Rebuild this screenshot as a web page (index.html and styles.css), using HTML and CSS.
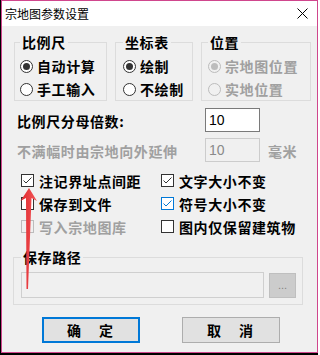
FILE: index.html
```html
<!DOCTYPE html>
<html lang="zh-CN">
<head>
    <meta charset="UTF-8">
    <meta name="viewport" content="width=device-width, initial-scale=1.0">
    <title>宗地图参数设置</title>
    <link rel="stylesheet" href="styles.css">
</head>
<body>

    <div class="window">
        <!-- Title bar -->
        <div class="titlebar">
            <span class="title">宗地图参数设置</span>
            <svg class="close" width="11" height="11" viewBox="0 0 11 11">
                <path d="M0.5 0.5L10.5 10.5M10.5 0.5L0.5 10.5" stroke="#000" stroke-width="1"/>
            </svg>
        </div>

        <div class="content">
            <!-- Option groups -->
            <div class="groups">
                <fieldset class="group g-scale">
                    <legend>比例尺</legend>
                    <div class="radio"><span class="dot on"></span><span>自动计算</span></div>
                    <div class="radio"><span class="dot"></span><span>手工输入</span></div>
                </fieldset>
                <fieldset class="group g-table">
                    <legend>坐标表</legend>
                    <div class="radio"><span class="dot on"></span><span>绘制</span></div>
                    <div class="radio"><span class="dot"></span><span>不绘制</span></div>
                </fieldset>
                <fieldset class="group g-pos">
                    <legend>位置</legend>
                    <div class="radio disabled"><span class="dot on"></span><span>宗地图位置</span></div>
                    <div class="radio disabled"><span class="dot"></span><span>实地位置</span></div>
                </fieldset>
            </div>

            <div class="field-row">
                <span class="field-label">比例尺分母倍数:</span>
                <span class="textbox">10</span>
            </div>
            <div class="field-row disabled">
                <span class="field-label">不满幅时由宗地向外延伸</span>
                <span class="textbox">10</span>
                <span class="unit">毫米</span>
            </div>

            <!-- Checkboxes -->
            <div class="checks">
                <div class="check"><span class="box"><svg width="11" height="11" viewBox="0 0 11 11"><polyline points="1.5,5.5 4,8 9.5,2.5" fill="none" stroke="#333" stroke-width="1"/></svg></span><span>注记界址点间距</span></div>
                <div class="check"><span class="box"><svg width="11" height="11" viewBox="0 0 11 11"><polyline points="1.5,5.5 4,8 9.5,2.5" fill="none" stroke="#333" stroke-width="1"/></svg></span><span>文字大小不变</span></div>
                <div class="check"><span class="box"></span><span>保存到文件</span></div>
                <div class="check focus"><span class="box"><svg width="11" height="11" viewBox="0 0 11 11"><polyline points="1.5,5.5 4,8 9.5,2.5" fill="none" stroke="#0078d7" stroke-width="1"/></svg></span><span>符号大小不变</span></div>
                <div class="check disabled"><span class="box"></span><span>写入宗地图库</span></div>
                <div class="check"><span class="box"></span><span>图内仅保留建筑物</span></div>
            </div>

            <fieldset class="group g-path">
                <legend>保存路径</legend>
                <div class="path-row">
                    <span class="path-input"></span>
                    <span class="browse">...</span>
                </div>
            </fieldset>

            <div class="buttons">
                <button class="btn default">确　定</button>
                <button class="btn">取　消</button>
            </div>
        </div>
    </div>

    <!-- red annotation arrow -->
    <svg class="arrow" width="320" height="355" viewBox="0 0 320 355">
        <defs>
            <linearGradient id="arrowFill" x1="0" y1="0" x2="1" y2="0">
                <stop offset="0" stop-color="#e0262b"/>
                <stop offset="1" stop-color="#f2585a"/>
            </linearGradient>
        </defs>
        <polygon points="29,188 37,201 31.5,198 28,289 26.5,289 26,198 20.5,201" fill="url(#arrowFill)"/>
    </svg>

</body>
</html>
```

FILE: styles.css
```css
body {
    margin: 0;
    height: 355px;
    overflow: hidden;
    background: linear-gradient(to right, #000 318px, #fff 318px);
    font-family: "Noto Sans CJK SC", sans-serif;
    color: #000;
}

.window {
    position: relative;
    margin-left: 1px;
    width: 315px;
    height: 351px;
    border: 1px solid #d0468d;
    background: #f0f0f0;
}

/* Title bar */
.titlebar {
    height: 25px;
    background: #fff;
    display: flex;
    align-items: center;
    justify-content: space-between;
    padding: 0 9px 0 3px;
}

.title {
    font-size: 12px;
    line-height: 16px;
}

.content {
    padding: 8px 0 0 12px;
    font-size: 14px;
    font-weight: 700;
    line-height: 16px;
    letter-spacing: 0.6px;
}

/* Group boxes */
.groups {
    display: flex;
    gap: 8px;
}

.group {
    margin: 0;
    min-width: 0;
    border: 1px solid #dcdcdc;
    padding: 6px 0 1px 6px;
    display: flex;
    flex-direction: column;
    gap: 3px;
}

.group legend {
    padding: 0 2px;
    line-height: 16px;
}

.g-scale { width: 93px; box-sizing: border-box; padding-left: 5px; }
.g-table { width: 78px; box-sizing: border-box; padding-left: 7px; }
.g-pos { width: 110px; box-sizing: border-box; }

.radio {
    height: 20px;
    display: flex;
    align-items: center;
    white-space: nowrap;
}

.dot {
    width: 13px;
    height: 13px;
    box-sizing: border-box;
    border: 1px solid #333;
    border-radius: 50%;
    background: #fff;
    margin-right: 4px;
    display: flex;
    align-items: center;
    justify-content: center;
    flex-shrink: 0;
}

.dot.on::after {
    content: "";
    width: 7px;
    height: 7px;
    border-radius: 50%;
    background: #333;
}

.disabled {
    color: #a0a0a0;
}

.radio.disabled .dot {
    border-color: #bcbcbc;
    background: #f0f0f0;
}

.radio.disabled .dot.on::after {
    background: #bcbcbc;
}

/* Number fields */
.field-row {
    display: flex;
    align-items: center;
    height: 24px;
    margin-top: 7px;
    padding-left: 3px;
}

.field-row + .field-row {
    margin-top: 6px;
}

.field-label {
    width: 188px;
    white-space: nowrap;
    padding-top: 2px;
}

.textbox {
    width: 55px;
    height: 24px;
    box-sizing: border-box;
    border: 1px solid #7a7a7a;
    background: #fff;
    font-family: "Liberation Sans", Arial, sans-serif;
    font-weight: 400;
    font-size: 14px;
    line-height: 22px;
    padding-left: 3px;
    letter-spacing: 0;
}

.field-row.disabled .textbox {
    border-color: #cccccc;
    background: #f0f0f0;
    color: #8a8a8a;
}

.unit {
    margin-left: 8px;
    padding-top: 2px;
}

/* Checkboxes */
.checks {
    display: grid;
    grid-template-columns: 140px 1fr;
    grid-auto-rows: 23px;
    margin-top: 7px;
    padding-left: 7px;
}

.check {
    display: flex;
    align-items: center;
    white-space: nowrap;
}

.box {
    width: 13px;
    height: 13px;
    box-sizing: border-box;
    border: 1px solid #333;
    background: #fff;
    margin-right: 5px;
    display: flex;
    flex-shrink: 0;
}

.check.focus .box {
    border-color: #0078d7;
}

.check.disabled .box {
    border-color: #bcbcbc;
    background: #f0f0f0;
}

/* Save path */
.g-path {
    margin: 11px 0 0 -1px;
    width: 290px;
    box-sizing: border-box;
    padding: 7px 6px 6px 7px;
}

.path-row {
    display: flex;
    align-items: flex-start;
}

.path-input {
    width: 244px;
    height: 26px;
    box-sizing: border-box;
    border: 1px solid #cfcfcf;
    background: #f0f0f0;
}

.browse {
    margin: 1px 0 0 5px;
    width: 27px;
    height: 25px;
    box-sizing: border-box;
    border: 1px solid #bfbfbf;
    background: #cccccc;
    color: #838383;
    font-family: "Liberation Sans", Arial, sans-serif;
    font-weight: 400;
    font-size: 11px;
    line-height: 22px;
    text-align: center;
    letter-spacing: 0;
}

/* Dialog buttons */
.buttons {
    display: flex;
    gap: 42px;
    margin-top: 12px;
    padding-left: 28px;
}

.btn {
    width: 98px;
    height: 26px;
    box-sizing: border-box;
    border: 1px solid #adadad;
    background: #e1e1e1;
    font-family: "Noto Sans CJK SC", sans-serif;
    font-size: 14px;
    font-weight: 700;
    line-height: 16px;
    letter-spacing: 2px;
    padding: 0;
    color: #000;
}

.btn.default {
    border: 2px solid #0078d7;
}

.arrow {
    position: absolute;
    left: 0;
    top: 0;
    pointer-events: none;
}
```
